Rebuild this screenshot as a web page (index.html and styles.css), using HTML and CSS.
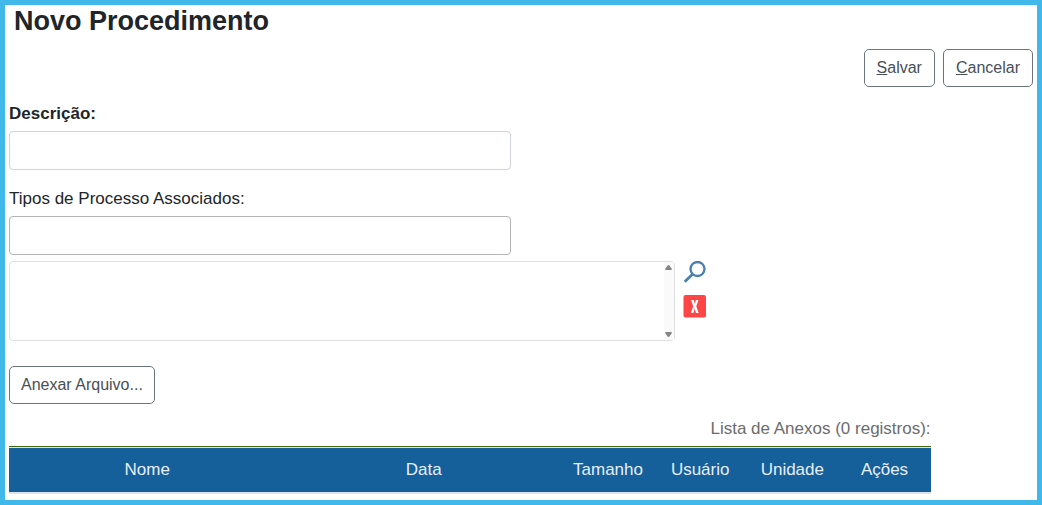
FILE: index.html
```html
<!DOCTYPE html>
<html lang="pt-BR">
<head>
<meta charset="utf-8">
<title>Novo Procedimento</title>
<link rel="stylesheet" href="styles.css">
</head>
<body>
<main class="page">
  <h1 class="title">Novo Procedimento</h1>
  <form class="form">
    <div class="commands">
      <button type="submit" class="btn" accesskey="s"><u>S</u>alvar</button>
      <button type="button" class="btn" accesskey="c"><u>C</u>ancelar</button>
    </div>
    <div class="field">
      <label class="label label-required" for="descricao">Descrição:</label>
      <input class="input" type="text" id="descricao">
    </div>
    <div class="field">
      <label class="label" for="tipo">Tipos de Processo Associados:</label>
      <input class="input input-search" type="text" id="tipo">
    </div>
    <div class="picker">
      <div class="list-box">
        <select class="list" multiple aria-label="Tipos de processo selecionados"></select>
        <div class="scroll" aria-hidden="true">
          <svg width="7" height="5" viewBox="0 0 7 5"><path d="M3.500 0Q4 0 4.400 .6L6.900 4Q7 5 6 5H1Q0 5 .1 4L2.600 .6Q3 0 3.500 0Z" fill="#858585"/></svg>
          <svg width="7" height="5" viewBox="0 0 7 5"><path d="M3.500 5Q4 5 4.400 4.400L6.900 1Q7 0 6 0H1Q0 0 .1 1L2.600 4.400Q3 5 3.500 5Z" fill="#858585"/></svg>
        </div>
      </div>
      <div class="tools">
        <button type="button" class="icon-btn" aria-label="Pesquisar">
          <svg width="24" height="24" viewBox="0 0 24 24" fill="none" stroke="#4a80ab"><circle cx="14.500" cy="8" r="7" stroke-width="2.300"/><path d="M9.500 13.300L1.700 20.800" stroke-width="2.800"/></svg>
        </button>
        <button type="button" class="icon-btn" aria-label="Remover">
          <svg width="24" height="24" viewBox="0 0 24 24"><rect x="0.500" y="0" width="22.500" height="22.500" rx="2" fill="#ff4545"/><path d="M8 5h2.700l1.100 3.800L12.900 5h2.600l-2.200 6.200 2.400 6.800H13l-1.300-4.400L10.400 18H7.800l2.400-6.800Z" fill="#fff"/></svg>
        </button>
      </div>
    </div>
    <button type="button" class="btn btn-attach">Anexar Arquivo...</button>
    <table class="table">
      <caption class="caption">Lista de Anexos (0 registros):</caption>
      <thead>
        <tr>
          <th class="wide">Nome</th>
          <th class="wide">Data</th>
          <th>Tamanho</th>
          <th>Usuário</th>
          <th>Unidade</th>
          <th>Ações</th>
        </tr>
      </thead>
    </table>
  </form>
</main>
</body>
</html>
```
FILE: styles.css
```css
* { box-sizing: border-box; }

body {
  margin: 0;
  background: #fff;
  color: #212529;
  font: 17px/24px "Liberation Sans", Arial, sans-serif;
}

.page {
  min-height: 100vh;
  padding: 0 4px 5px;
  border: 5px solid #41b8ea;
}

.title {
  margin: 0;
  padding-left: 5px;
  font-size: 27px;
  line-height: 32px;
}

.commands {
  display: flex;
  justify-content: flex-end;
  gap: 8px;
  margin: 12px 0 15px;
}

.btn {
  height: 38px;
  padding: 0 12px;
  border: 1px solid #6c757d;
  border-radius: 5px;
  background: #fff;
  color: #495057;
  font: inherit;
  font-size: 16px;
}

.btn-attach { padding: 0 11px; }

.field { margin-bottom: 17px; }

.label {
  display: block;
  margin-bottom: 5px;
}

.label-required { font-weight: bold; }

.input {
  display: block;
  width: 49%;
  height: 39px;
  padding: 0 12px;
  border: 1px solid #ced4da;
  border-radius: 4px;
  background: #fff;
  font: inherit;
}

.input-search { border-color: #b4b4b6; }

.picker {
  display: flex;
  gap: 8px;
  margin-top: -11px;
  margin-bottom: 25px;
}

.list-box {
  position: relative;
  width: 65%;
}

.list {
  display: block;
  width: 100%;
  height: 80px;
  border: 1px solid #dedfe1;
  border-radius: 4px;
  background: #fff;
  font: inherit;
}

.scroll {
  position: absolute;
  inset: 1px 1px 1px auto;
  display: flex;
  flex-direction: column;
  justify-content: space-between;
  align-items: center;
  width: 10px;
  padding: 3px 0;
  background: #fafafa;
}

.scroll svg { display: block; }

.tools {
  display: flex;
  flex-direction: column;
  gap: 10px;
}

.icon-btn {
  width: 24px;
  height: 24px;
  padding: 0;
  border: 0;
  background: none;
}

.icon-btn svg { display: block; }

.table {
  width: 90%;
  margin-top: 13px;
  border-spacing: 0;
  table-layout: fixed;
}

.caption {
  padding-bottom: 5px;
  border-bottom: 1px solid #45630f;
  color: #6c6c6c;
  text-align: right;
}

.table th {
  height: 47px;
  padding: 0;
  border-top: 1px solid #dee2e6;
  border-bottom: 2px solid #dee2e6;
  background: #155f9b;
  color: #e8eff5;
  font-weight: normal;
  text-align: center;
}

.table .wide { width: 30%; }
```
